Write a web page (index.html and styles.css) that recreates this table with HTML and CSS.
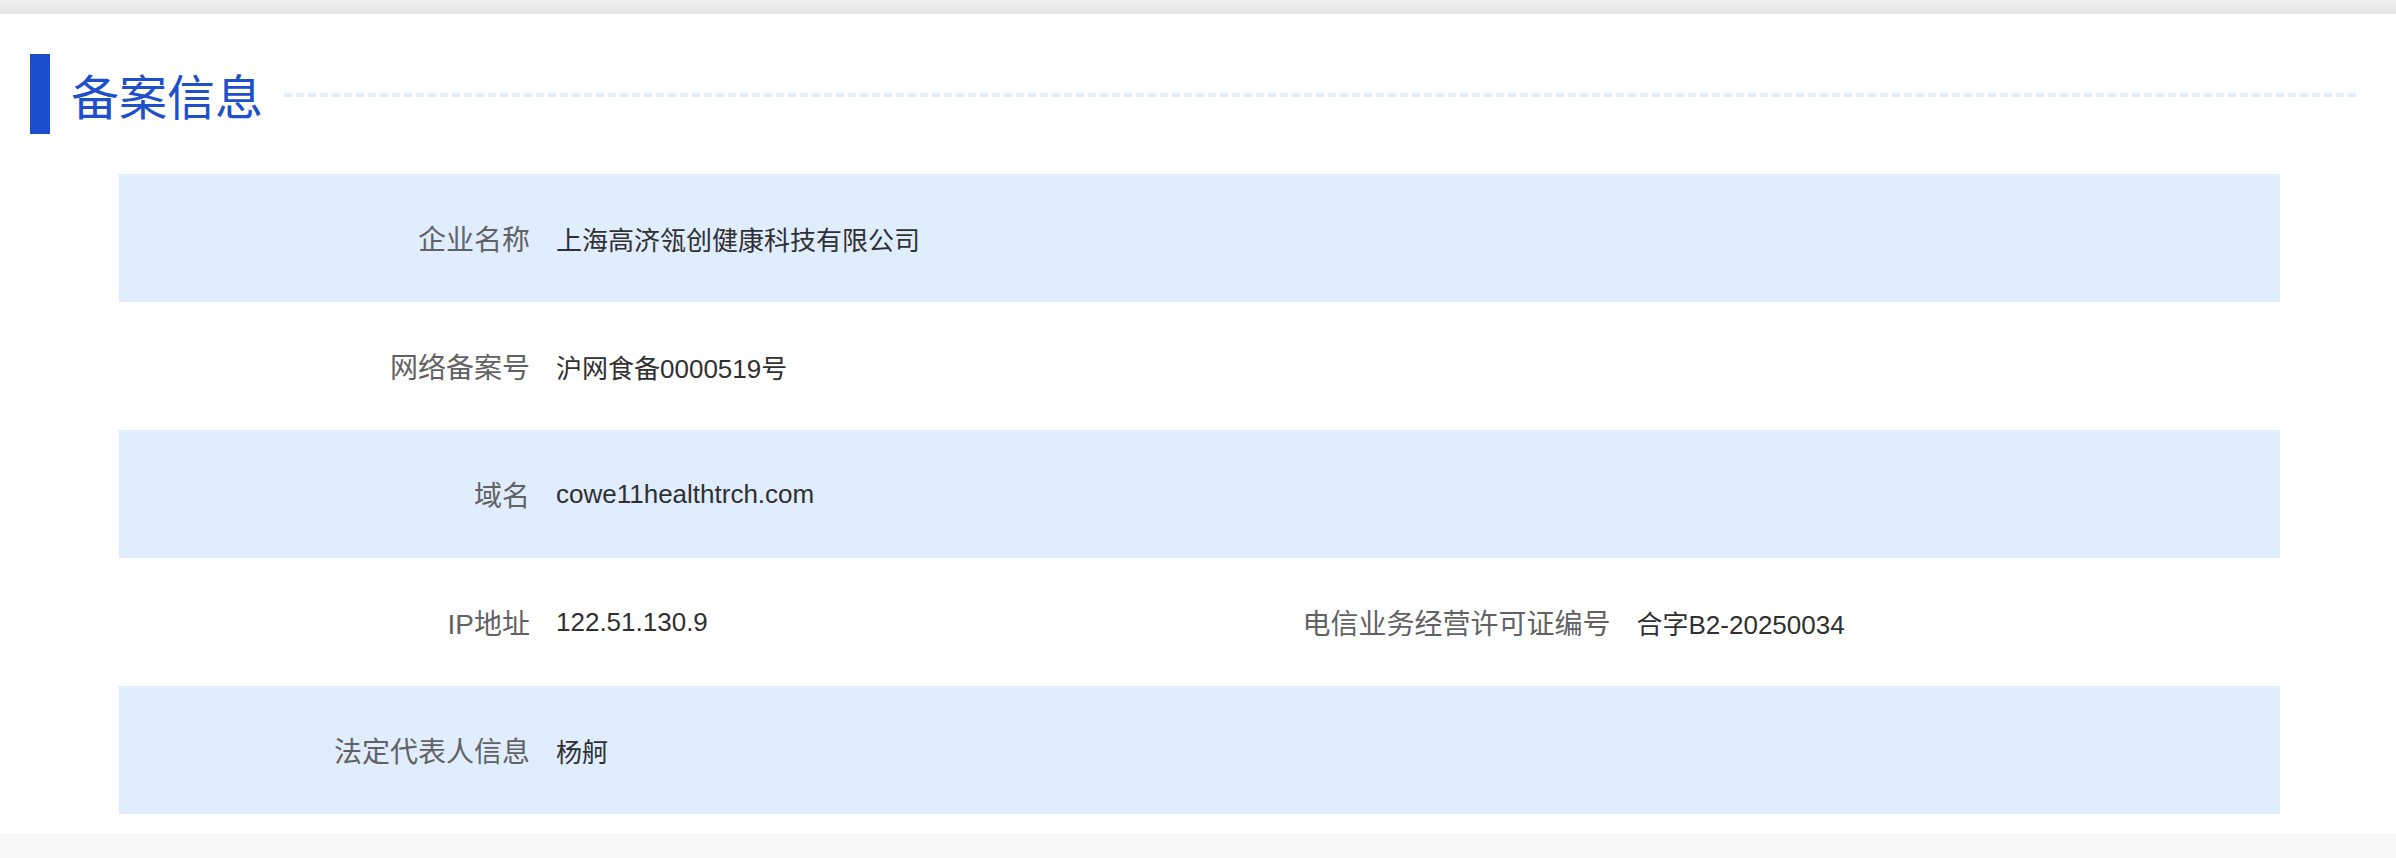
FILE: index.html
```html
<!DOCTYPE html>
<html lang="zh-CN">
<head>
<meta charset="utf-8">
<title>备案信息</title>
<link rel="stylesheet" href="styles.css">
</head>
<body>
<div class="topbar"></div>
<section class="card">
  <div class="heading">
    <span class="heading-bar"></span>
    <h1 class="heading-title">备案信息</h1>
    <span class="heading-line"></span>
  </div>
  <div class="info">
    <div class="row row-alt">
      <div class="label">企业名称</div>
      <div class="value">上海高济瓴创健康科技有限公司</div>
      <div class="label"></div>
      <div class="value"></div>
    </div>
    <div class="row">
      <div class="label">网络备案号</div>
      <div class="value">沪网食备0000519号</div>
      <div class="label"></div>
      <div class="value"></div>
    </div>
    <div class="row row-alt">
      <div class="label">域名</div>
      <div class="value">cowe11healthtrch.com</div>
      <div class="label"></div>
      <div class="value"></div>
    </div>
    <div class="row">
      <div class="label">IP地址</div>
      <div class="value">122.51.130.9</div>
      <div class="label">电信业务经营许可证编号</div>
      <div class="value">合字B2-20250034</div>
    </div>
    <div class="row row-alt">
      <div class="label">法定代表人信息</div>
      <div class="value">杨舸</div>
      <div class="label"></div>
      <div class="value"></div>
    </div>
  </div>
</section>
<div class="bottombar"></div>
</body>
</html>
```

FILE: styles.css
```css
html, body {
  margin: 0;
  padding: 0;
  background: #f8f8f8;
}

body {
  font-family: "Liberation Sans", "Noto Sans CJK SC", sans-serif;
}

.topbar {
  height: 14px;
  background: linear-gradient(#f0f0f0, #e3e3e3);
}

.card {
  background: #ffffff;
  height: 820px;
  box-sizing: border-box;
  padding: 40px 116px 0 0;
}

.heading {
  display: flex;
  align-items: center;
  height: 80px;
  padding-left: 30px;
  margin-right: -80px;
}

.heading-bar {
  width: 20px;
  height: 80px;
  background: #1d4fcd;
  flex: none;
}

.heading-title {
  margin: 0 0 0 21px;
  font-family: "Noto Sans CJK SC", sans-serif;
  font-weight: 400;
  font-size: 48px;
  line-height: 80px;
  color: #1e4fcc;
  flex: none;
}

.heading-line {
  flex: 1;
  height: 4px;
  margin-left: 21px;
  margin-top: 2px;
  background: repeating-linear-gradient(to right, #e3efff 0 8px, transparent 8px 12px);
}

.info {
  margin: 40px 0 0 119px;
}

.row {
  display: grid;
  grid-template-columns: 411px 1fr 411px 1fr;
  height: 128px;
  align-items: center;
}

.row-alt {
  background: #e0edfe;
}

.label {
  text-align: right;
  font-size: 28px;
  color: #626262;
}

.value {
  padding-left: 26px;
  font-size: 26px;
  color: #303030;
}

.bottombar {
  height: 24px;
  background: #f8f8f8;
}
```
